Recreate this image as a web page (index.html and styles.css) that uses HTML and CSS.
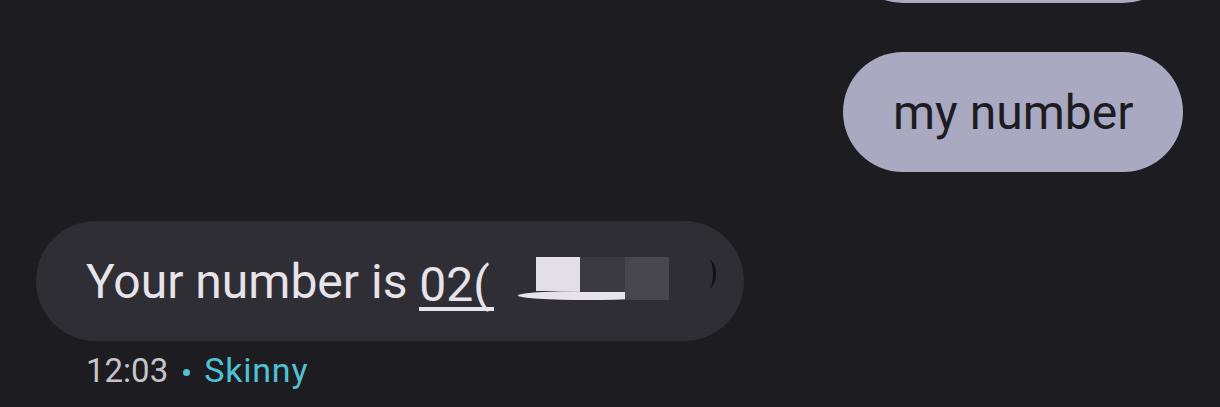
FILE: index.html
```html
<!DOCTYPE html>
<html>
<head>
<meta charset="utf-8">
<link rel="stylesheet" href="styles.css">
</head>
<body>
<div class="thread">
  <div class="row sent">
    <div class="bubble out prev"></div>
  </div>
  <div class="row sent">
    <div class="bubble out">my number</div>
  </div>
  <div class="row recv">
    <div class="bubble in">
      <span class="txt">Your number is </span><span class="num">02(</span><span class="redact"><span class="lens"></span><span class="blk b1"></span><span class="blk b2"></span><span class="blk b3"></span><span class="tail"></span></span>
    </div>
  </div>
  <div class="meta"><span class="time">12:03</span><span class="dot"></span><span class="sim">Skinny</span></div>
</div>
</body>
</html>
```

FILE: styles.css
```css
html, body {
  margin: 0;
  padding: 0;
  background: #1d1c21;
  height: 407px;
  overflow: hidden;
}
.thread {
  display: flex;
  flex-direction: column;
  gap: 49px;
  font-family: Roboto, "Noto Sans", sans-serif;
}
.row {
  display: flex;
}
.row.sent {
  justify-content: flex-end;
  padding-right: 37px;
}
.row.recv {
  padding-left: 36px;
}
.bubble {
  height: 120px;
  border-radius: 60px;
  box-sizing: border-box;
  display: flex;
  align-items: center;
  font-size: 48px;
  white-space: nowrap;
}
.bubble.out {
  background: #a9a9c2;
  color: #1d1c22;
  padding: 0 50px;
  width: 340px;
}
.bubble.prev {
  margin-top: -117px;
}
.bubble.in {
  background: #2f2e35;
  color: #e6e3ea;
  padding: 0 0 0 50px;
  width: 708px;
}
.txt { white-space: pre; }
.num {
  display: inline-block;
  border-bottom: 4px solid #e6e3ea;
  margin-top: 10px;
  line-height: 48px;
  height: 50px;
  box-sizing: border-box;
  padding-right: 4px;
}
.redact {
  position: relative;
  width: 230px;
  height: 60px;
  margin-top: 12px;
}
.lens {
  position: absolute;
  left: 24px;
  top: 34px;
  width: 140px;
  height: 9px;
  background: #e6e3ea;
  border-radius: 50%;
}
.blk {
  position: absolute;
  top: 0;
  width: 45px;
  height: 34px;
}
.b1 { left: 42px; width: 44px; background: #e2dfe7; }
.b2 { left: 86px; background: #3b3a41; height: 35px; }
.b3 { left: 131px; background: #48474e; height: 43px; width: 44px; }
.tail {
  position: absolute;
  left: 208px;
  top: 3px;
  width: 14px;
  height: 28px;
  border-right: 3px solid #121116;
  border-radius: 0 50% 50% 0;
  box-sizing: border-box;
}
.meta {
  margin-top: -40px;
  padding-left: 86px;
  font-size: 33px;
  display: flex;
  align-items: center;
}
.time { color: #c6c3cc; }
.dot {
  width: 7px;
  height: 7px;
  border-radius: 50%;
  background: #4fc3d6;
  margin: 4px 14px 0 15px;
}
.sim { color: #4fc3d6; font-size: 34px; letter-spacing: 0.8px; }
```
